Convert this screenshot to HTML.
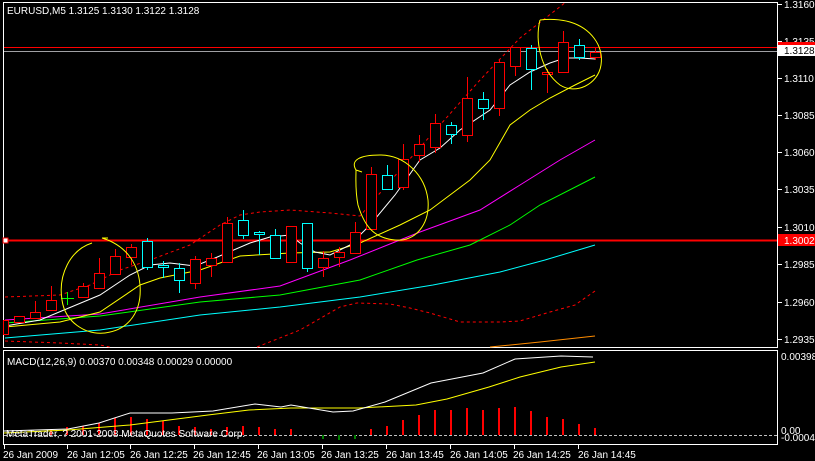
<!DOCTYPE html>
<html><head><meta charset="utf-8"><style>
html,body{margin:0;padding:0;background:#000;width:815px;height:461px;overflow:hidden}
svg{display:block}
text{font-family:"Liberation Sans",sans-serif;font-size:10px;fill:#fff}
</style></head><body>
<svg width="815" height="461" viewBox="0 0 815 461" xmlns="http://www.w3.org/2000/svg">
<rect width="815" height="461" fill="#000"/>
<g fill="none" stroke="#fff" stroke-width="1" shape-rendering="crispEdges">
<rect x="3.5" y="2.5" width="774" height="345"/>
<rect x="3.5" y="350.5" width="774" height="94"/>
</g>
<text x="7" y="14" font-size="11">EURUSD,M5  1.3125 1.3130 1.3122 1.3128</text>
<g shape-rendering="crispEdges" stroke="#fff">
<line x1="778" y1="4.5" x2="782" y2="4.5"/><line x1="778" y1="41.5" x2="782" y2="41.5"/><line x1="778" y1="78.5" x2="782" y2="78.5"/><line x1="778" y1="115.5" x2="782" y2="115.5"/><line x1="778" y1="152.5" x2="782" y2="152.5"/><line x1="778" y1="189.5" x2="782" y2="189.5"/><line x1="778" y1="227.5" x2="782" y2="227.5"/><line x1="778" y1="264.5" x2="782" y2="264.5"/><line x1="778" y1="302.5" x2="782" y2="302.5"/><line x1="778" y1="339.5" x2="782" y2="339.5"/>
</g>
<g>
<text x="784" y="8">1.3160</text><text x="784" y="45">1.3135</text><text x="784" y="82">1.3110</text><text x="784" y="119">1.3085</text><text x="784" y="156">1.3060</text><text x="784" y="193">1.3035</text><text x="784" y="231">1.3010</text><text x="784" y="268">1.2985</text><text x="784" y="306">1.2960</text><text x="784" y="343">1.2935</text>
</g>
<g shape-rendering="crispEdges">
<line x1="4" y1="47.5" x2="777" y2="47.5" stroke="#f00"/>
<line x1="4" y1="51.5" x2="777" y2="51.5" stroke="#a0a0a4"/>
<line x1="4" y1="240.5" x2="777" y2="240.5" stroke="#f00" stroke-width="2"/>
<rect x="778" y="42" width="37" height="4" fill="#f00"/>
<rect x="778" y="45" width="37" height="11" fill="#fff"/>
<rect x="778" y="234" width="37" height="12" fill="#f00"/>
<rect x="3" y="238" width="5" height="5" fill="#fff" stroke="#f00"/>
</g>
<text x="784" y="54" style="fill:#000">1.3128</text>
<text x="784" y="244" style="fill:#fff">1.3002</text>
<g fill="none" stroke-width="1">
<polyline stroke="#f00" stroke-dasharray="3,3" points="5,297 60,295 90,285 120,270 150,260 190,245 220,225 240,215 260,212 290,210 330,213 360,216 400,170 440,125 480,80 520,38 566,2"/>
<polyline stroke="#f00" stroke-dasharray="3,3" points="5,341 60,343 100,345 110,347"/>
<polyline stroke="#f00" stroke-dasharray="3,3" points="257,347 300,330 340,307 357,303 390,304 410,308 430,313 460,322 500,322 520,321 550,312 575,305 595,291"/>
<polyline stroke="#00ffff" points="5,338 100,330 200,315 280,307 360,297 433,285 500,272 545,260 595,245"/>
<polyline stroke="#00ff00" points="5,323 100,316 200,302 280,295 360,280 417,260 470,245 510,225 540,205 595,177"/>
<polyline stroke="#ff00ff" points="5,320 100,314 200,297 280,286 350,260 420,232 480,210 520,185 560,160 595,140"/>
<polyline stroke="#ff8c00" points="490,347 540,342 595,336"/>
<polyline stroke="#ffff00" points="5,327 60,322 100,312 140,285 160,278 200,270 240,256 290,253 330,252 360,243 400,225 430,210 450,195 470,180 490,160 510,125 530,110 550,98 575,85 595,75"/>
<polyline stroke="#fff" points="5,326 40,320 100,295 130,275 150,265 170,263 195,266 215,258 250,243 270,237 290,235 300,243 315,252 330,255 350,245 370,225 395,195 420,160 440,148 460,130 490,110 510,85 530,72 550,63 565,58 580,58 595,59"/>
</g>
<g stroke-width="1" shape-rendering="crispEdges" fill="#000">
<g stroke="#f00">
<rect x="3.5" y="320.5" width="5" height="14"/>
<line x1="35.5" y1="301" x2="35.5" y2="312"/><line x1="51.5" y1="286" x2="51.5" y2="300"/><line x1="83.5" y1="283" x2="83.5" y2="286"/><line x1="99.5" y1="258" x2="99.5" y2="273"/><line x1="115.5" y1="249" x2="115.5" y2="256"/><line x1="131.5" y1="244" x2="131.5" y2="265"/><line x1="195.5" y1="256" x2="195.5" y2="289"/><line x1="211.5" y1="253" x2="211.5" y2="277"/><line x1="227.5" y1="217" x2="227.5" y2="223"/><line x1="323.5" y1="251" x2="323.5" y2="277"/><line x1="339.5" y1="247" x2="339.5" y2="267"/><line x1="355.5" y1="222" x2="355.5" y2="232"/><line x1="371.5" y1="167" x2="371.5" y2="174"/><line x1="403.5" y1="144" x2="403.5" y2="190"/><line x1="419.5" y1="135" x2="419.5" y2="162"/><line x1="435.5" y1="114" x2="435.5" y2="153"/><line x1="467.5" y1="77" x2="467.5" y2="142"/><line x1="499.5" y1="60" x2="499.5" y2="116"/><line x1="515.5" y1="47" x2="515.5" y2="76"/><line x1="547.5" y1="69" x2="547.5" y2="93"/><line x1="563.5" y1="31" x2="563.5" y2="42"/><line x1="595.5" y1="48" x2="595.5" y2="60"/>
<rect x="14.5" y="316.5" width="10" height="6"/><rect x="30.5" y="312.5" width="10" height="6"/><rect x="46.5" y="300.5" width="10" height="10"/><rect x="78.5" y="286.5" width="10" height="11"/><rect x="94.5" y="273.5" width="10" height="15"/><rect x="110.5" y="256.5" width="10" height="18"/><rect x="126.5" y="247.5" width="10" height="10"/><rect x="190.5" y="259.5" width="10" height="24"/><rect x="206.5" y="258.5" width="10" height="7"/><rect x="222.5" y="223.5" width="10" height="39"/><rect x="286.5" y="226.5" width="10" height="36"/><rect x="318.5" y="258.5" width="10" height="9"/><rect x="334.5" y="252.5" width="10" height="5"/><rect x="350.5" y="232.5" width="10" height="21"/><rect x="366.5" y="174.5" width="10" height="55"/><rect x="398.5" y="159.5" width="10" height="28"/><rect x="414.5" y="144.5" width="10" height="11"/><rect x="430.5" y="123.5" width="10" height="24"/><rect x="462.5" y="98.5" width="10" height="37"/><rect x="494.5" y="62.5" width="10" height="46"/><rect x="510.5" y="47.5" width="10" height="19"/><rect x="542.5" y="72.5" width="10" height="2"/><rect x="558.5" y="42.5" width="10" height="30"/><rect x="590.5" y="52.5" width="10" height="5"/>
</g>
<g stroke="#00ffff">
<line x1="147.5" y1="238" x2="147.5" y2="270"/><line x1="163.5" y1="261" x2="163.5" y2="278"/><line x1="179.5" y1="263" x2="179.5" y2="293"/><line x1="243.5" y1="210" x2="243.5" y2="239"/><line x1="259.5" y1="231" x2="259.5" y2="255"/><line x1="275.5" y1="229" x2="275.5" y2="258"/><line x1="307.5" y1="223" x2="307.5" y2="272"/><line x1="387.5" y1="165" x2="387.5" y2="189"/><line x1="451.5" y1="122" x2="451.5" y2="144"/><line x1="483.5" y1="92" x2="483.5" y2="120"/><line x1="531.5" y1="45" x2="531.5" y2="90"/><line x1="579.5" y1="39" x2="579.5" y2="60"/>
<rect x="142.5" y="241.5" width="10" height="26"/><rect x="158.5" y="265.5" width="10" height="2"/><rect x="174.5" y="268.5" width="10" height="12"/><rect x="238.5" y="220.5" width="10" height="15"/><rect x="254.5" y="232.5" width="10" height="2"/><rect x="270.5" y="235.5" width="10" height="23"/><rect x="302.5" y="223.5" width="10" height="45"/><rect x="382.5" y="175.5" width="10" height="14"/><rect x="446.5" y="125.5" width="10" height="9"/><rect x="478.5" y="99.5" width="10" height="9"/><rect x="526.5" y="48.5" width="10" height="21"/><rect x="574.5" y="45.5" width="10" height="12"/>
</g>
<g stroke="#00ff00"><line x1="67.5" y1="292" x2="67.5" y2="305"/><line x1="61" y1="298.5" x2="74" y2="298.5"/></g>
</g>
<g fill="none" stroke="#ffff00" stroke-width="1">
<path d="M92,243 C70,250 58,275 62,300 C65,322 85,335 105,333 C130,330 142,310 140,285 C138,262 125,245 102,238 L108,238"/>
<path d="M356,170 C350,160 360,155 380,155 C405,155 425,175 428,200 C430,225 415,242 395,240 C375,238 365,228 358,205 C355,190 356,178 356,170 L362,172"/>
<path d="M540,20 C535,40 540,70 560,85 C575,95 598,85 601,65 C604,45 590,28 570,22 C560,19 548,19 540,20"/>
</g>
<text x="7" y="365" font-size="10">MACD(12,26,9) 0.00370 0.00348 0.00029 0.00000</text>
<line x1="4" y1="435.5" x2="777" y2="435.5" stroke="#c0c0c0" stroke-dasharray="3,2" shape-rendering="crispEdges"/>
<g stroke="#f00" stroke-width="2" shape-rendering="crispEdges">
<line x1="51" y1="429" x2="51" y2="435"/><line x1="67" y1="427" x2="67" y2="435"/><line x1="83" y1="426" x2="83" y2="435"/><line x1="99" y1="423" x2="99" y2="435"/><line x1="115" y1="418" x2="115" y2="435"/><line x1="131" y1="417" x2="131" y2="435"/><line x1="147" y1="419" x2="147" y2="435"/><line x1="163" y1="421" x2="163" y2="435"/><line x1="179" y1="426" x2="179" y2="435"/><line x1="195" y1="427" x2="195" y2="435"/><line x1="211" y1="429" x2="211" y2="435"/><line x1="227" y1="427" x2="227" y2="435"/><line x1="243" y1="426" x2="243" y2="435"/><line x1="259" y1="427" x2="259" y2="435"/><line x1="275" y1="429" x2="275" y2="435"/><line x1="291" y1="429" x2="291" y2="435"/>
<line x1="371" y1="429" x2="371" y2="435"/><line x1="387" y1="426" x2="387" y2="435"/><line x1="403" y1="420" x2="403" y2="435"/><line x1="419" y1="415" x2="419" y2="435"/><line x1="435" y1="410" x2="435" y2="435"/><line x1="451" y1="410" x2="451" y2="435"/><line x1="467" y1="408" x2="467" y2="435"/><line x1="483" y1="410" x2="483" y2="435"/><line x1="499" y1="408" x2="499" y2="435"/><line x1="515" y1="407" x2="515" y2="435"/><line x1="531" y1="411" x2="531" y2="435"/><line x1="547" y1="417" x2="547" y2="435"/><line x1="563" y1="419" x2="563" y2="435"/><line x1="579" y1="424" x2="579" y2="435"/><line x1="595" y1="428" x2="595" y2="435"/>
</g>
<g stroke="#008000" stroke-width="2" shape-rendering="crispEdges"><line x1="323" y1="435" x2="323" y2="439"/><line x1="339" y1="435" x2="339" y2="440"/><line x1="355" y1="435" x2="355" y2="439"/></g>
<polyline fill="none" stroke="#ffff00" points="4,433 68,430 130,425 208,415 249,410 291,408 359,408 416,405 447,399 489,387 520,377 561,367 595,362"/>
<polyline fill="none" stroke="#fff" points="4,431 68,429 99,423 130,413 172,413 213,411 255,404 281,407 291,405 333,412 353,411 385,402 431,383 483,373 515,359 561,356 593,357"/>
<text x="6" y="437" font-size="10">MetaTrader, ? 2001-2008 MetaQuotes Software Corp.</text>
<text x="781" y="360" font-size="9">0.00398</text>
<text x="781" y="434" font-size="9">0.00</text>
<text x="781" y="441" font-size="9">-0.00047</text>
<g stroke="#fff" shape-rendering="crispEdges">
<line x1="4.5" y1="444" x2="4.5" y2="449"/><line x1="67.5" y1="444" x2="67.5" y2="449"/><line x1="130.5" y1="444" x2="130.5" y2="449"/><line x1="194.5" y1="444" x2="194.5" y2="449"/><line x1="258.5" y1="444" x2="258.5" y2="449"/><line x1="322.5" y1="444" x2="322.5" y2="449"/><line x1="386.5" y1="444" x2="386.5" y2="449"/><line x1="450.5" y1="444" x2="450.5" y2="449"/><line x1="514.5" y1="444" x2="514.5" y2="449"/><line x1="578.5" y1="444" x2="578.5" y2="449"/>
</g>
<g font-size="10">
<text x="3" y="458">26 Jan 2009</text><text x="67" y="458">26 Jan 12:05</text><text x="130" y="458">26 Jan 12:25</text><text x="193" y="458">26 Jan 12:45</text><text x="257" y="458">26 Jan 13:05</text><text x="321" y="458">26 Jan 13:25</text><text x="386" y="458">26 Jan 13:45</text><text x="450" y="458">26 Jan 14:05</text><text x="513" y="458">26 Jan 14:25</text><text x="578" y="458">26 Jan 14:45</text>
</g>
</svg>
</body></html>
